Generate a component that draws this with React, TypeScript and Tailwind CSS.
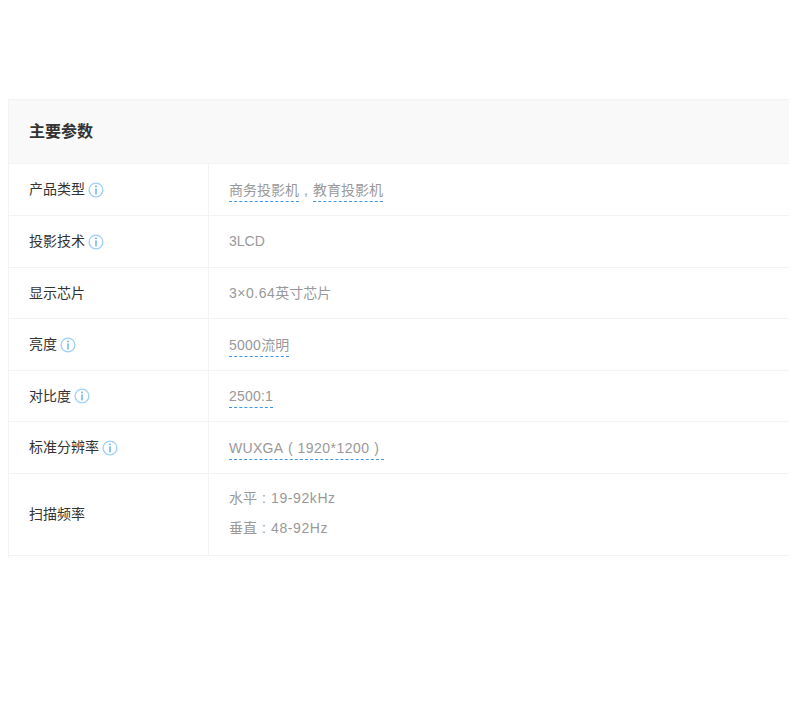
const font = "[font-family:'Liberation_Sans','Noto_Sans_CJK_SC',sans-serif]"

function InfoIcon() {
  return (
    <svg className="ml-[3px] shrink-0" width="16" height="16" viewBox="0 0 16 16" fill="none">
      <circle cx="8" cy="8" r="6.9" stroke="#9fd0fb" strokeWidth="1.4" />
      <rect x="7.2" y="3.6" width="1.6" height="1.6" fill="#5aaef5" />
      <rect x="7.3" y="6.4" width="1.4" height="6" fill="#5aaef5" />
    </svg>
  )
}

function Link({ children }: { children: React.ReactNode }) {
  return <span className="border-b border-dashed border-[#3f97e8] pt-[2px] pb-[1px] leading-[20px] inline-block">{children}</span>
}

// fullwidth punctuation box, the glyph sits in the middle
function Mark({ children }: { children: React.ReactNode }) {
  return <span className="inline-block w-[14px] text-center">{children}</span>
}

function Row({ label, info, h, children }: { label: string; info?: boolean; h: string; children: React.ReactNode }) {
  return (
    <div className={`flex border-b border-[#f3f3f3] ${h}`}>
      <div className="w-[200px] shrink-0 border-r border-[#f3f3f3] pl-5 flex items-center text-[14px] text-[#333]">
        {label}
        {info && <InfoIcon />}
      </div>
      <div className="flex-1 pl-5 flex flex-col justify-center text-[14px] text-[#999] items-start">{children}</div>
    </div>
  )
}

export default function App() {
  return (
    <div className={`bg-white h-[722px] w-[799px] pt-[99px] pl-2 pr-[10px] ${font}`}>
      <div className="h-[459px] border-l border-t border-[#f3f3f3] overflow-hidden">
        <div className="h-[64px] bg-[#f9f9f9] border-b border-[#f3f3f3] pl-5 pt-px flex items-center text-[16px] font-bold text-[#333]">
          主要参数
        </div>
        <Row label="产品类型" info h="h-[52px]">
          <div className="flex">
            <Link>商务投影机</Link>
            <span className="w-[14px] text-center pt-[2px] leading-[20px]">,</span>
            <Link>教育投影机</Link>
          </div>
        </Row>
        <Row label="投影技术" info h="h-[52px]">3LCD</Row>
        <Row label="显示芯片" h="h-[51px]">
          <div><span className="tracking-[0.5px]">3×0.64</span>英寸芯片</div>
        </Row>
        <Row label="亮度" info h="h-[52px]">
          <Link><span className="tracking-[0.25px]">5000</span>流明</Link>
        </Row>
        <Row label="对比度" info h="h-[51px]">
          <Link><span className="tracking-[0.2px]">2500:1</span></Link>
        </Row>
        <Row label="标准分辨率" info h="h-[52px]">
          <Link>
            <span className="tracking-[0.3px]">WUXGA</span><Mark>(</Mark><span className="tracking-[0.5px]">1920*1200</span><Mark>)</Mark>
          </Link>
        </Row>
        <Row label="扫描频率" h="h-[82px]">
          <div className="pb-1">
            <div className="leading-[30px]">水平<Mark>:</Mark><span className="tracking-[0.6px]">19-92kHz</span></div>
            <div className="leading-[30px]">垂直<Mark>:</Mark><span className="tracking-[0.6px]">48-92Hz</span></div>
          </div>
        </Row>
      </div>
    </div>
  )
}
